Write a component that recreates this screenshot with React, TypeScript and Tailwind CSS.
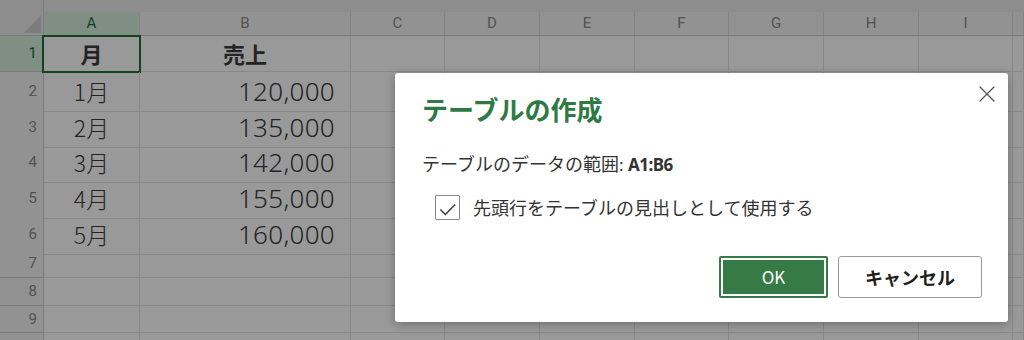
import { X } from 'lucide-react'

const COLS = 'grid grid-cols-[44px_96px_211px_94px_95px_95px_94px_95px_95px_94px_1fr]'
const LETTERS = ['A', 'B', 'C', 'D', 'E', 'F', 'G', 'H', 'I', '']

const ROWS = [
  { n: 1, h: 'h-[36px]', month: '月', sales: '売上', head: true },
  { n: 2, h: 'h-[36px]', month: '1月', sales: '120,000' },
  { n: 3, h: 'h-[35px]', month: '2月', sales: '135,000' },
  { n: 4, h: 'h-[36px]', month: '3月', sales: '142,000' },
  { n: 5, h: 'h-[36px]', month: '4月', sales: '155,000' },
  { n: 6, h: 'h-[35px]', month: '5月', sales: '160,000' },
  { n: 7, h: 'h-[28px]' },
  { n: 8, h: 'h-[28px]' },
  { n: 9, h: 'h-[27px]' },
  // row 10 only peeks in at the bottom edge, number hidden
  { n: 10, h: 'h-[28px]', hideNumber: true },
]

const jp = 'font-["Noto_Sans_CJK_JP","Noto_Sans",sans-serif]'

function Sheet() {
  return (
    <div className="bg-white">
      {/* column headers */}
      <div className={`${COLS} h-[36px] border-b border-[#cdcdcd] bg-[#ebebeb]`}>
        <div className="relative border-r border-[#cdcdcd]">
          <svg className="absolute left-[24px] top-[15px]" width="17" height="18" viewBox="0 0 17 18">
            <polygon points="17,0 17,18 0,18" fill="#cfcfcf" />
          </svg>
        </div>
        {LETTERS.map((l) => (
          <div
            key={l || 'j'}
            className={`mt-[12px] flex items-center justify-center border-r border-[#dcdcdc] font-['Roboto',sans-serif] text-[15px] ${
              l === 'A' ? 'bg-[#d4eedb] text-[#1d6b37]' : 'bg-[#f4f4f4] text-[#8a8a8a]'
            }`}
          >
            {l}
          </div>
        ))}
      </div>

      {ROWS.map((r) => (
        <div key={r.n} className={`${COLS} ${r.h}`}>
          <div
            className={`flex items-center justify-end border-r border-b border-[#cdcdcd] pr-[6px] font-['Roboto',sans-serif] text-[15px] ${
              r.n === 1 ? 'bg-[#d4eedb] text-[#1d6b37]' : 'bg-[#f4f4f4] text-[#8a8a8a]'
            }`}
          >
            {r.hideNumber ? null : r.n}
          </div>
          <div
            className={`relative flex items-center justify-center border-r border-b border-[#e4e4e4] ${jp} text-[#3c3c3c] ${
              r.head ? 'text-[22px] font-bold' : 'text-[23px] font-light'
            }`}
          >
            {r.month}
            {r.n === 1 && <div className="absolute -left-[2px] -top-[1px] h-[38px] w-[99px] border-2 border-[#1f6e3a]" />}
          </div>
          <div
            className={`flex items-center border-r border-b border-[#e4e4e4] text-[#3c3c3c] ${
              r.head
                ? `justify-center ${jp} text-[22px] font-bold`
                : `justify-end pr-[15px] font-['Noto_Sans',sans-serif] text-[26px] font-light tracking-[0.3px]`
            }`}
          >
            {r.sales}
          </div>
          {LETTERS.slice(2).map((l) => (
            <div key={l || 'j'} className="border-r border-b border-[#e4e4e4]" />
          ))}
        </div>
      ))}
    </div>
  )
}

function CreateTableDialog() {
  return (
    <div
      className={`absolute left-[395px] top-[73px] flex h-[249px] w-[613px] flex-col rounded-[3px] bg-white pl-[27px] pr-[26px] pt-[18px] shadow-[0_2px_10px_rgba(0,0,0,0.28)] ${jp}`}
    >
      <button className="absolute right-[7px] top-[7px] text-[#555]">
        <X size={28} strokeWidth={1.1} />
      </button>
      <h2 className="text-[26px] font-bold leading-[36px] text-[#2f7a44]">テーブルの作成</h2>
      <p className="mt-[23px] text-[18px] leading-[26px] text-[#333]">
        テーブルのデータの範囲
        <span className="font-['Noto_Sans',sans-serif] text-[17px]">
          : <span className="font-bold tracking-[-0.5px]">A1:B6</span>
        </span>
      </p>
      <label className="mt-[17px] flex items-center gap-[13px] pl-[13px] text-[18px] leading-[25px] text-[#333]">
        <span className="flex h-[25px] w-[25px] items-center justify-center rounded-[1px] border border-[#8a8a8a]">
          <svg width="24" height="24" viewBox="0 0 24 24">
            <path d="M4.5 13.5 L9.8 18.8 L20 8.3" fill="none" stroke="#3a3a3a" strokeWidth="1.5" />
          </svg>
        </span>
        先頭行をテーブルの見出しとして使用する
      </label>
      <div className="mt-[36px] flex justify-end gap-[10px]">
        <button className="h-[42px] w-[109px] rounded-[2px] border-2 border-[#367a46] bg-[#367a46] text-[17px] text-white shadow-[inset_0_0_0_2px_#fff]">
          OK
        </button>
        <button className="h-[42px] w-[144px] rounded-[3px] border border-[#9a9a9a] bg-white text-[18px] font-bold text-[#1f1f1f]">
          キャンセル
        </button>
      </div>
    </div>
  )
}

export default function App() {
  return (
    <div className="relative h-[340px] w-[1024px] overflow-hidden">
      <Sheet />
      <div className="absolute inset-0 bg-black/40" />
      <CreateTableDialog />
    </div>
  )
}
